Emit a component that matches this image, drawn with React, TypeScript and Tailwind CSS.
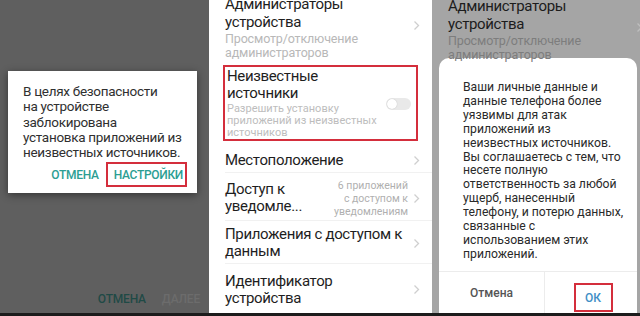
import React from 'react';

const Chevron = ({ className = '' }: { className?: string }) => (
  <svg width="7" height="11" viewBox="0 0 7 11" className={className}>
    <polyline points="1.5,1.5 5.5,5.5 1.5,9.5" fill="none" stroke="#cfcfcf" strokeWidth="1.3" />
  </svg>
);

const title = 'text-[15px] leading-[17px] tracking-[-0.35px] text-[#1e1e1e]';

function AdminRow({ dim, className = '' }: { dim?: boolean; className?: string }) {
  return (
    <div className={`relative -mt-[4px] pl-[16px] ${className}`}>
      <div className={`text-[15px] leading-[17.5px] tracking-[-0.35px] ${dim ? 'text-[#1c1c1c]' : 'text-[#1e1e1e]'}`}>
        Администраторы
        <br />
        устройства
      </div>
      <div className={`mt-[1px] text-[12.5px] leading-[13.5px] tracking-[-0.15px] ${dim ? 'text-[#7d7d7d]' : 'text-[#b8b8b8]'}`}>
        Просмотр/отключение
        <br />
        администраторов
      </div>
      <Chevron className={`absolute top-[24px] ${dim ? 'right-[-3px] opacity-60' : 'right-[12px]'}`} />
    </div>
  );
}

export default function App() {
  return (
    <div className="flex h-[316px] w-[640px] flex-col overflow-hidden bg-white" style={{ fontFamily: 'Roboto, "Noto Sans", sans-serif' }}>
      <div className="flex h-[313px]">
        {/* panel 1 */}
        <div className="flex w-[209px] flex-col bg-[#5f5f5f]">
          <div className="mx-[8px] mt-[71px] h-[122px] w-[189px] bg-white shadow-[0_2px_8px_rgba(0,0,0,0.45)]">
            <div className="pl-[15px] pt-[13px] text-[13.5px] leading-[15.3px] tracking-[-0.3px] text-[#303030]">
              В целях безопасности
              <br />
              на устройстве
              <br />
              заблокирована
              <br />
              установка приложений из
              <br />
              неизвестных источников.
            </div>
            <div className="mt-[2px] flex items-center justify-end pr-[10px] text-[12px] font-medium tracking-[-0.3px] text-[#2b9e93]">
              <span className="mr-[7px]">ОТМЕНА</span>
              <span className="flex h-[25px] items-center border-2 border-[#d42e3c] pl-[6px] pr-[2px]">НАСТРОЙКИ</span>
            </div>
          </div>
          <div className="mt-auto mb-[5px] flex justify-end gap-[16px] pr-[9px] text-[12px] font-medium tracking-[-0.2px]">
            <span className="text-[#1f4a46]">ОТМЕНА</span>
            <span className="text-[#6c6c6c]">ДАЛЕЕ</span>
          </div>
        </div>

        {/* panel 2 */}
        <div className="flex w-[223px] flex-col bg-white">
          <AdminRow className="h-[69px] shrink-0" />
          <div className="relative mx-[14px] h-[76px] shrink-0 border-2 border-[#d42e3c] pl-[2px] pt-[1px]">
            <div className={title}>
              Неизвестные
              <br />
              источники
            </div>
            <div className="mt-[1px] h-[36px] overflow-hidden text-[11px] leading-[12px] text-[#bdbdbd]">
              Разрешить установку
              <br />
              приложений из неизвестных
              <br />
              источников
            </div>
            <div className="absolute right-[5px] top-[31px] h-[12px] w-[25px] rounded-full bg-[#e9e9e9]">
              <div className="ml-[1px] mt-[1px] h-[10px] w-[10px] rounded-full bg-white shadow-[0_0_1px_rgba(0,0,0,0.25)]" />
            </div>
          </div>
          <div className="ml-[16px] flex h-[32px] shrink-0 items-center justify-between border-b border-[#f1f1f1] pr-[12px] pt-[8px]">
            <span className={title}>Местоположение</span>
            <Chevron />
          </div>
          <div className="ml-[16px] flex h-[48px] shrink-0 items-center justify-between border-b border-[#f1f1f1] pr-[12px] pt-[3px]">
            <span className={title}>
              Доступ к
              <br />
              уведомле...
            </span>
            <div className="flex items-center gap-[5px]">
              <span className="text-right text-[10.5px] leading-[13px] text-[#b0b0b0]">
                6 приложений
                <br />
                с доступом к
                <br />
                уведомлениям
              </span>
              <Chevron />
            </div>
          </div>
          <div className="ml-[16px] flex h-[43px] shrink-0 items-center justify-between border-b border-[#f1f1f1] pr-[12px] pt-[2px]">
            <span className={title}>
              Приложения с доступом к
              <br />
              данным
            </span>
            <Chevron />
          </div>
          <div className="ml-[16px] flex flex-1 items-center justify-between pr-[12px] pt-[2px]">
            <span className={title}>
              Идентификатор
              <br />
              устройства
            </span>
            <Chevron />
          </div>
        </div>

        {/* panel 3 */}
        <div className="flex flex-1 flex-col bg-[#a5a5a5]">
          <div className="pt-[2px]">
            <AdminRow dim className="h-[61px]" />
          </div>
          <div className="ml-[7px] mr-[3px] mt-[-1px] flex flex-1 flex-col rounded-t-[10px] bg-white">
            <div className="pl-[24px] pt-[23px] text-[12.2px] leading-[13.9px] text-[#2a2a2a]">
              Ваши личные данные и
              <br />
              данные телефона более
              <br />
              уязвимы для атак
              <br />
              приложений из
              <br />
              неизвестных источников.
              <br />
              Вы соглашаетесь с тем, что
              <br />
              несете полную
              <br />
              ответственность за любой
              <br />
              ущерб, нанесенный
              <br />
              телефону, и потерю данных,
              <br />
              связанные с
              <br />
              использованием этих
              <br />
              приложений.
            </div>
            <div className="mt-auto flex h-[42px] border-t border-[#ececec]">
              <div className="flex w-[106px] items-center justify-center border-r border-[#ececec] text-[12px] font-medium text-[#555555]">
                Отмена
              </div>
              <div className="flex flex-1 items-end justify-center pb-[1px]">
                <span className="ml-[4px] flex h-[29px] w-[39px] items-center justify-center border-2 border-[#d42e3c] text-[12px] font-medium text-[#3f8fc6]">
                  ОК
                </span>
              </div>
            </div>
          </div>
        </div>
      </div>
      <div className="h-[3px] bg-[#1c1c1c]" />
    </div>
  );
}
